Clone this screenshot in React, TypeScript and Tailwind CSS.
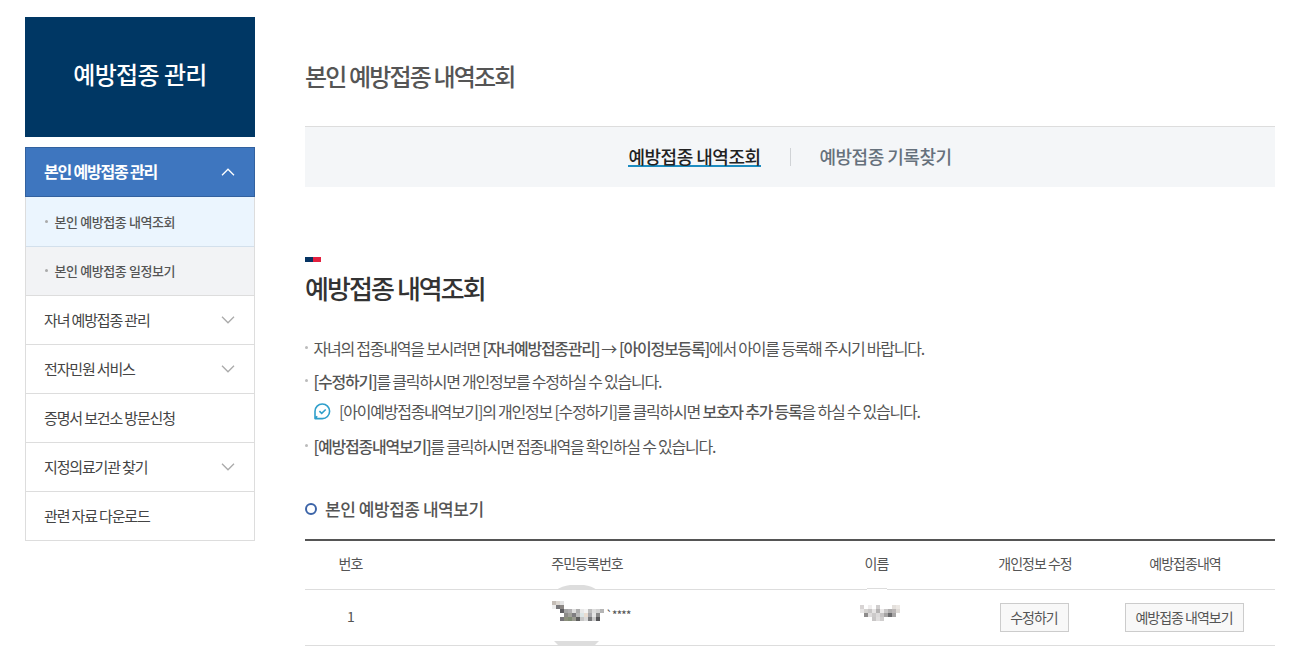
import { ReactNode } from "react";

type MenuItem = {
  label: string;
  hasChildren: boolean;
};

type Cell = [number, number, string];

const subMenu = [
  { label: "본인 예방접종 내역조회", active: true },
  { label: "본인 예방접종 일정보기", active: false },
];

const menu: MenuItem[] = [
  { label: "자녀 예방접종 관리", hasChildren: true },
  { label: "전자민원 서비스", hasChildren: true },
  { label: "증명서 보건소 방문신청", hasChildren: false },
  { label: "지정의료기관 찾기", hasChildren: true },
  { label: "관련 자료 다운로드", hasChildren: false },
];

// column, row, colour of each 4px block
const numberCells: Cell[] = [
  [0, 0, "#c4bdb6"], [1, 0, "#dcd7d1"], [2, 0, "#e4e4e4"],
  [0, 1, "#eeeeee"], [1, 1, "#77777a"], [2, 1, "#8b8784"],
  [2, 2, "#5d5c60"], [3, 2, "#a5a5a5"], [4, 2, "#b0aeb0"], [5, 2, "#dedede"], [6, 2, "#adadad"], [7, 2, "#e9e9e9"], [8, 2, "#f3f3f3"], [9, 2, "#bdbdbd"], [10, 2, "#dddddd"], [11, 2, "#d2d2d2"], [12, 2, "#b5b5b5"],
  [3, 3, "#8b8a88"], [4, 3, "#a0a09a"], [5, 3, "#7e7d80"], [6, 3, "#b9b9b9"], [7, 3, "#dbe5e6"], [8, 3, "#e9ddd2"], [9, 3, "#a8a8ac"], [10, 3, "#e5e5e5"], [11, 3, "#8a8a8a"],
  [2, 4, "#77757a"], [3, 4, "#8c8f7c"], [4, 4, "#7f8a74"], [5, 4, "#99998f"], [6, 4, "#5d5d5d"], [7, 4, "#c7c7c7"], [8, 4, "#dadada"], [9, 4, "#77787a"], [10, 4, "#c9c9c9"], [11, 4, "#555558"],
];

const nameCells: Cell[] = [
  [0, 0, "#d8d4d4"], [2, 0, "#f0eeee"], [4, 0, "#d0cece"], [8, 0, "#e4e0dc"], [9, 0, "#ece8e4"],
  [0, 1, "#e8e6e6"], [1, 1, "#d4d2d0"], [2, 1, "#c8c6c6"], [3, 1, "#e6e4e4"], [4, 1, "#b4b2b2"], [5, 1, "#eceaea"], [6, 1, "#cac8c8"], [7, 1, "#b0aeae"], [8, 1, "#bcb8b8"], [9, 1, "#e0dcd8"],
  [1, 2, "#8e8c8c"], [2, 2, "#dedcdc"], [3, 2, "#cccaca"], [4, 2, "#dcdada"], [5, 2, "#c6c4c4"], [6, 2, "#a6a4a4"], [7, 2, "#6c6c6e"], [8, 2, "#a8a6a6"],
  [3, 3, "#c8c6c6"], [4, 3, "#e0dede"], [5, 3, "#d0cece"],
];

const Mosaic = ({ cells, className }: { cells: Cell[]; className: string }) => (
  <svg className={className} viewBox="0 0 52 20" width="52" height="20" shapeRendering="crispEdges">
    {cells.map(([x, y, fill]) => (
      <rect key={`${x}-${y}`} x={x * 4} y={y * 4} width="4" height="4" fill={fill} />
    ))}
  </svg>
);

const Chevron = ({ up = false }: { up?: boolean }) => (
  <svg width="14" height="8" viewBox="0 0 14 8" fill="none" stroke={up ? "#fff" : "#aaa"} strokeWidth="1.3">
    <path d={up ? "M1 7.2 7 1.2l6 6" : "M1 .8l6 6 6-6"} />
  </svg>
);

const NoteIcon = () => (
  <svg className="shrink-0" width="17" height="17" viewBox="0 0 17 17" fill="none" stroke="#2f9fcb" strokeWidth="1.6">
    <path d="M1 15.6V8.3A7.3 7.3 0 1 1 8.3 15.6H1l2.2-2.4" strokeLinejoin="round" />
    <path d="m5.4 8.2 2.3 2.2 4-3.9" />
  </svg>
);

const Bullet = ({ children }: { children: ReactNode }) => (
  <li className="flex h-6 items-center">
    <span className="mr-[5.5px] mb-0.5 size-[3px] shrink-0 rounded-full bg-[#bbb]" />
    <span>{children}</span>
  </li>
);

function Sidebar() {
  return (
    <aside className="w-[230px] shrink-0 pt-[17px]">
      <h2 className="flex h-[120px] items-center justify-center bg-[#003764] pb-[7px] text-2xl font-medium tracking-[-0.6px] text-white">
        예방접종 관리
      </h2>
      <nav className="mt-2.5 text-[15px] tracking-[-1.15px] text-[#444]">
        <div className="flex h-[50px] items-center justify-between border border-[#32619f] bg-[#3e76bf] pr-[19px] pl-[18px] text-base font-bold tracking-[-1.2px] text-white">
          <span className="pb-0.5">본인 예방접종 관리</span>
          <Chevron up />
        </div>
        <ul className="border-x border-[#ddd] text-[13px] font-medium tracking-[-0.4px] text-[#555]">
          {subMenu.map((s) => (
            <li
              key={s.label}
              className={`flex items-center border-b pl-[19px] ${
                s.active ? "h-[50px] border-[#d3e0ec] bg-[#ebf5fe] pt-px" : "h-[49px] border-[#ddd] bg-[#f2f3f5]"
              }`}
            >
              <span className="mr-[6.5px] mb-0.5 size-[3px] rounded-full bg-[#aaa]" />
              {s.label}
            </li>
          ))}
        </ul>
        <ul className="border-x border-[#ddd]">
          {menu.map((m) => (
            <li key={m.label} className="flex h-[49px] items-center justify-between border-b border-[#ddd] pr-[19px] pl-[18px]">
              <span>{m.label}</span>
              {m.hasChildren && <Chevron />}
            </li>
          ))}
        </ul>
      </nav>
    </aside>
  );
}

function RecordTable() {
  return (
    <table className="w-full table-fixed border-t-2 border-[#555] text-center text-sm tracking-[-1px] text-[#555]">
      <colgroup>
        <col className="w-[91px]" />
        <col className="w-[382px]" />
        <col className="w-[197px]" />
        <col className="w-[120px]" />
        <col className="w-[180px]" />
      </colgroup>
      <thead>
        <tr className="h-[49px] border-b border-[#ddd]">
          <th className="pb-[3px] font-normal">번호</th>
          <th className="pb-[3px] font-normal">주민등록번호</th>
          <th className="pb-[3px] font-normal">이름</th>
          <th className="pb-[3px] font-normal">개인정보 수정</th>
          <th className="pb-[3px] font-normal">예방접종내역</th>
        </tr>
      </thead>
      <tbody>
        <tr className="h-14 border-b border-[#ddd]">
          <td className="pb-0.5">1</td>
          <td className="relative">
            <svg className="absolute -top-[5px] left-[158px]" width="46" height="61" viewBox="0 0 46 61" fill="#ddd">
              <path d="M2 5Q8 1 16 0H30Q38 1 43 5Z" />
              <path d="M0 56H45L41 60H4Z" />
            </svg>
            <Mosaic cells={numberCells} className="absolute top-[11px] left-[156px]" />
            <span className="absolute top-[17px] left-[210px] text-[11px] font-medium tracking-[-0.7px]">`****</span>
          </td>
          <td className="relative">
            <span className="absolute -top-[2px] left-[89px] h-[3px] w-5 border-t border-[#ddd] bg-white" />
            <Mosaic cells={nameCells} className="absolute top-[15px] left-[82px]" />
          </td>
          <td>
            <button className="mr-0.5 h-[29px] w-[69px] border border-[#ccc] bg-[#f8f8f8] pb-px align-middle">수정하기</button>
          </td>
          <td>
            <button className="mr-0.5 h-[29px] w-[119px] border border-[#ccc] bg-[#f8f8f8] pb-px align-middle">예방접종 내역보기</button>
          </td>
        </tr>
      </tbody>
    </table>
  );
}

export default function App() {
  return (
    <div className="flex h-[665px] w-[1305px] gap-[50px] overflow-hidden bg-white px-[25px] font-['Noto_Sans_CJK_KR',sans-serif] text-[#555]">
      <Sidebar />
      <main className="w-[970px] pt-[58px]">
        <h1 className="h-9 text-2xl leading-9 font-medium tracking-[-1.85px]">본인 예방접종 내역조회</h1>

        <div className="mt-8 flex h-[61px] items-center justify-center border-t border-[#ddd] bg-[#f4f6f8] text-lg leading-6 font-medium tracking-[-0.5px]">
          <a className="h-5 border-b-2 border-[#1c8cc0] leading-[18px] text-[#222]">예방접종 내역조회</a>
          <span className="mx-[29px] h-[18px] w-px bg-[#d0d3d6]" />
          <a className="pb-0.5 text-[#66717c]">예방접종 기록찾기</a>
        </div>

        <div className="mt-[70px] flex h-[5px] w-4">
          <span className="flex-1 bg-[#063463]" />
          <span className="flex-1 bg-[#e3203f]" />
        </div>
        <h2 className="mt-1.5 h-10 text-[26px] leading-10 font-medium tracking-[-1.93px] text-[#333]">예방접종 내역조회</h2>

        <ul className="mt-7 text-base leading-6 tracking-[-1.23px]">
          <Bullet>
            자녀의 접종내역을 보시려면 <b className="font-medium">[자녀예방접종관리]</b>
            <span className="mr-[3px] ml-0.5">→</span>
            <b className="font-medium">[아이정보등록]</b>에서 아이를 등록해 주시기 바랍니다.
          </Bullet>
          <li className="h-[9px]" />
          <Bullet>
            <b className="font-medium">[수정하기]</b>를 클릭하시면 개인정보를 수정하실 수 있습니다.
          </Bullet>
          <li className="mt-1.5 flex h-6 items-center gap-2 pl-[9px]">
            <NoteIcon />
            <span>
              [아이예방접종내역보기]의 개인정보 [수정하기]를 클릭하시면 <b className="font-medium">보호자 추가 등록</b>을 하실 수 있습니다.
            </span>
          </li>
          <li className="h-[11px]" />
          <Bullet>
            <b className="font-medium">[예방접종내역보기]</b>를 클릭하시면 접종내역을 확인하실 수 있습니다.
          </Bullet>
        </ul>

        <h3 className="mt-[39px] mb-[18px] flex h-6 items-center gap-2 text-[17px] font-medium tracking-[-0.45px]">
          <span className="size-3 rounded-full border-2 border-[#3c64a8]" />
          본인 예방접종 내역보기
        </h3>
        <RecordTable />
      </main>
    </div>
  );
}
